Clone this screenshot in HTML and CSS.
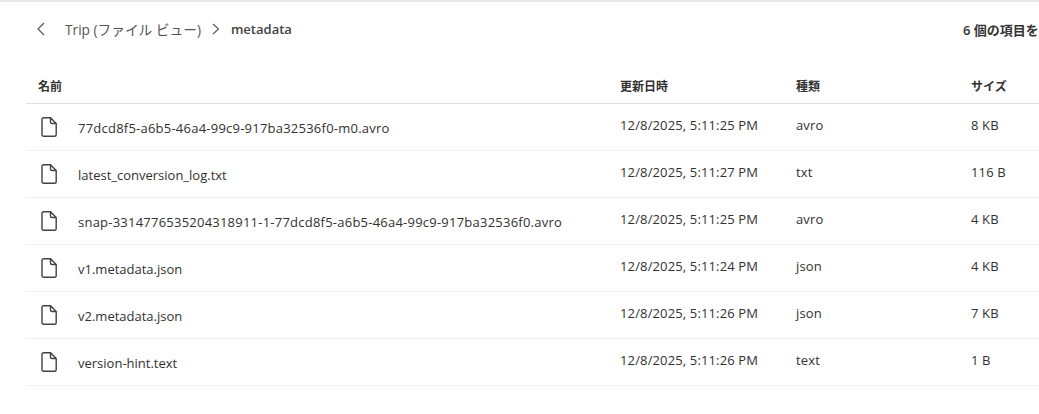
FILE: index.html
```html
<!DOCTYPE html>
<html lang="ja">
<head>
    <meta charset="UTF-8">
    <title>metadata</title>
    <link rel="stylesheet" href="styles.css">
</head>
<body>

<div class="container">
    <div class="toolbar">
        <svg class="back-icon" width="12" height="14" viewBox="0 0 12 14"><path d="M9 1 L3 7 L9 13" fill="none" stroke="#555" stroke-width="1.2"/></svg>
        <span class="crumb">Trip (ファイル ビュー)</span>
        <svg class="crumb-sep" width="10" height="12" viewBox="0 0 10 12"><path d="M2 1 L7.5 6 L2 11" fill="none" stroke="#555" stroke-width="1.1"/></svg>
        <span class="crumb-current">metadata</span>
        <span class="item-count">6 個の項目を</span>
    </div>

    <div class="row header-row">
        <div class="name-head">名前</div>
        <div>更新日時</div>
        <div>種類</div>
        <div>サイズ</div>
    </div>

    <div class="row file-row">
        <div class="name-cell"><svg class="file-icon" viewBox="0 0 16 20"><path d="M2.5 .8 H9.5 L15.2 6.5 V17.7 A1.5 1.5 0 0 1 13.7 19.2 H2.5 A1.5 1.5 0 0 1 1 17.7 V2.3 A1.5 1.5 0 0 1 2.5 .8 Z M9.5 .8 V5 A1.5 1.5 0 0 0 11 6.5 H15.2"/></svg><span class="name-text hash-name">77dcd8f5-a6b5-46a4-99c9-917ba32536f0-m0.avro</span></div>
        <div class="meta">12/8/2025, 5:11:25 PM</div>
        <div class="meta">avro</div>
        <div class="meta">8 KB</div>
    </div>
    <div class="row file-row">
        <div class="name-cell"><svg class="file-icon" viewBox="0 0 16 20"><path d="M2.5 .8 H9.5 L15.2 6.5 V17.7 A1.5 1.5 0 0 1 13.7 19.2 H2.5 A1.5 1.5 0 0 1 1 17.7 V2.3 A1.5 1.5 0 0 1 2.5 .8 Z M9.5 .8 V5 A1.5 1.5 0 0 0 11 6.5 H15.2"/></svg><span class="name-text">latest_conversion_log.txt</span></div>
        <div class="meta">12/8/2025, 5:11:27 PM</div>
        <div class="meta">txt</div>
        <div class="meta">116 B</div>
    </div>
    <div class="row file-row">
        <div class="name-cell"><svg class="file-icon" viewBox="0 0 16 20"><path d="M2.5 .8 H9.5 L15.2 6.5 V17.7 A1.5 1.5 0 0 1 13.7 19.2 H2.5 A1.5 1.5 0 0 1 1 17.7 V2.3 A1.5 1.5 0 0 1 2.5 .8 Z M9.5 .8 V5 A1.5 1.5 0 0 0 11 6.5 H15.2"/></svg><span class="name-text hash-name">snap-3314776535204318911-1-77dcd8f5-a6b5-46a4-99c9-917ba32536f0.avro</span></div>
        <div class="meta">12/8/2025, 5:11:25 PM</div>
        <div class="meta">avro</div>
        <div class="meta">4 KB</div>
    </div>
    <div class="row file-row">
        <div class="name-cell"><svg class="file-icon" viewBox="0 0 16 20"><path d="M2.5 .8 H9.5 L15.2 6.5 V17.7 A1.5 1.5 0 0 1 13.7 19.2 H2.5 A1.5 1.5 0 0 1 1 17.7 V2.3 A1.5 1.5 0 0 1 2.5 .8 Z M9.5 .8 V5 A1.5 1.5 0 0 0 11 6.5 H15.2"/></svg><span class="name-text">v1.metadata.json</span></div>
        <div class="meta">12/8/2025, 5:11:24 PM</div>
        <div class="meta">json</div>
        <div class="meta">4 KB</div>
    </div>
    <div class="row file-row">
        <div class="name-cell"><svg class="file-icon" viewBox="0 0 16 20"><path d="M2.5 .8 H9.5 L15.2 6.5 V17.7 A1.5 1.5 0 0 1 13.7 19.2 H2.5 A1.5 1.5 0 0 1 1 17.7 V2.3 A1.5 1.5 0 0 1 2.5 .8 Z M9.5 .8 V5 A1.5 1.5 0 0 0 11 6.5 H15.2"/></svg><span class="name-text">v2.metadata.json</span></div>
        <div class="meta">12/8/2025, 5:11:26 PM</div>
        <div class="meta">json</div>
        <div class="meta">7 KB</div>
    </div>
    <div class="row file-row">
        <div class="name-cell"><svg class="file-icon" viewBox="0 0 16 20"><path d="M2.5 .8 H9.5 L15.2 6.5 V17.7 A1.5 1.5 0 0 1 13.7 19.2 H2.5 A1.5 1.5 0 0 1 1 17.7 V2.3 A1.5 1.5 0 0 1 2.5 .8 Z M9.5 .8 V5 A1.5 1.5 0 0 0 11 6.5 H15.2"/></svg><span class="name-text">version-hint.text</span></div>
        <div class="meta">12/8/2025, 5:11:26 PM</div>
        <div class="meta">text</div>
        <div class="meta">1 B</div>
    </div>
</div>

</body>
</html>
```

FILE: styles.css
```css
html, body {
    margin: 0;
    padding: 0;
}
body {
    font-family: "Open Sans", "Noto Sans CJK JP", sans-serif;
    font-size: 13px;
    color: #323130;
    background-color: #ffffff;
}
.container {
    padding-left: 26px;
    border-top: 2px solid #e8e8e8;
}
.toolbar {
    display: flex;
    align-items: center;
    height: 54px;
    padding-left: 9px;
}
.back-icon {
    margin-right: 18px;
}
.crumb {
    font-size: 13.7px;
    color: #555;
}
.crumb-sep {
    margin: 0 10px;
}
.crumb-current {
    font-weight: 600;
    color: #424242;
}
.item-count {
    flex: 0 0 76px;
    margin-left: auto;
    font-weight: 600;
    white-space: nowrap;
    color: #333;
}
.row {
    display: grid;
    grid-template-columns: 594px 176px 175px 1fr;
    border-bottom: 1px solid #f0f0f0;
    align-items: center;
}
.header-row {
    height: 48px;
    box-sizing: border-box;
    padding-top: 12px;
    font-size: 12px;
    font-weight: 600;
    border-bottom-color: #e0e0e0;
}
.name-head {
    padding-left: 12px;
}
.file-row {
    height: 47px;
    box-sizing: border-box;
}
.name-cell {
    display: flex;
    align-items: center;
    padding-left: 15px;
}
.name-text {
    padding-top: 2px;
}
.hash-name {
    letter-spacing: .23px;
}
.meta {
    padding-bottom: 4px;
    letter-spacing: .14px;
}
.file-icon {
    width: 16px;
    height: 20px;
    margin-right: 21px;
    fill: none;
    stroke: #424242;
    stroke-width: 1.4;
    flex-shrink: 0;
}
```
